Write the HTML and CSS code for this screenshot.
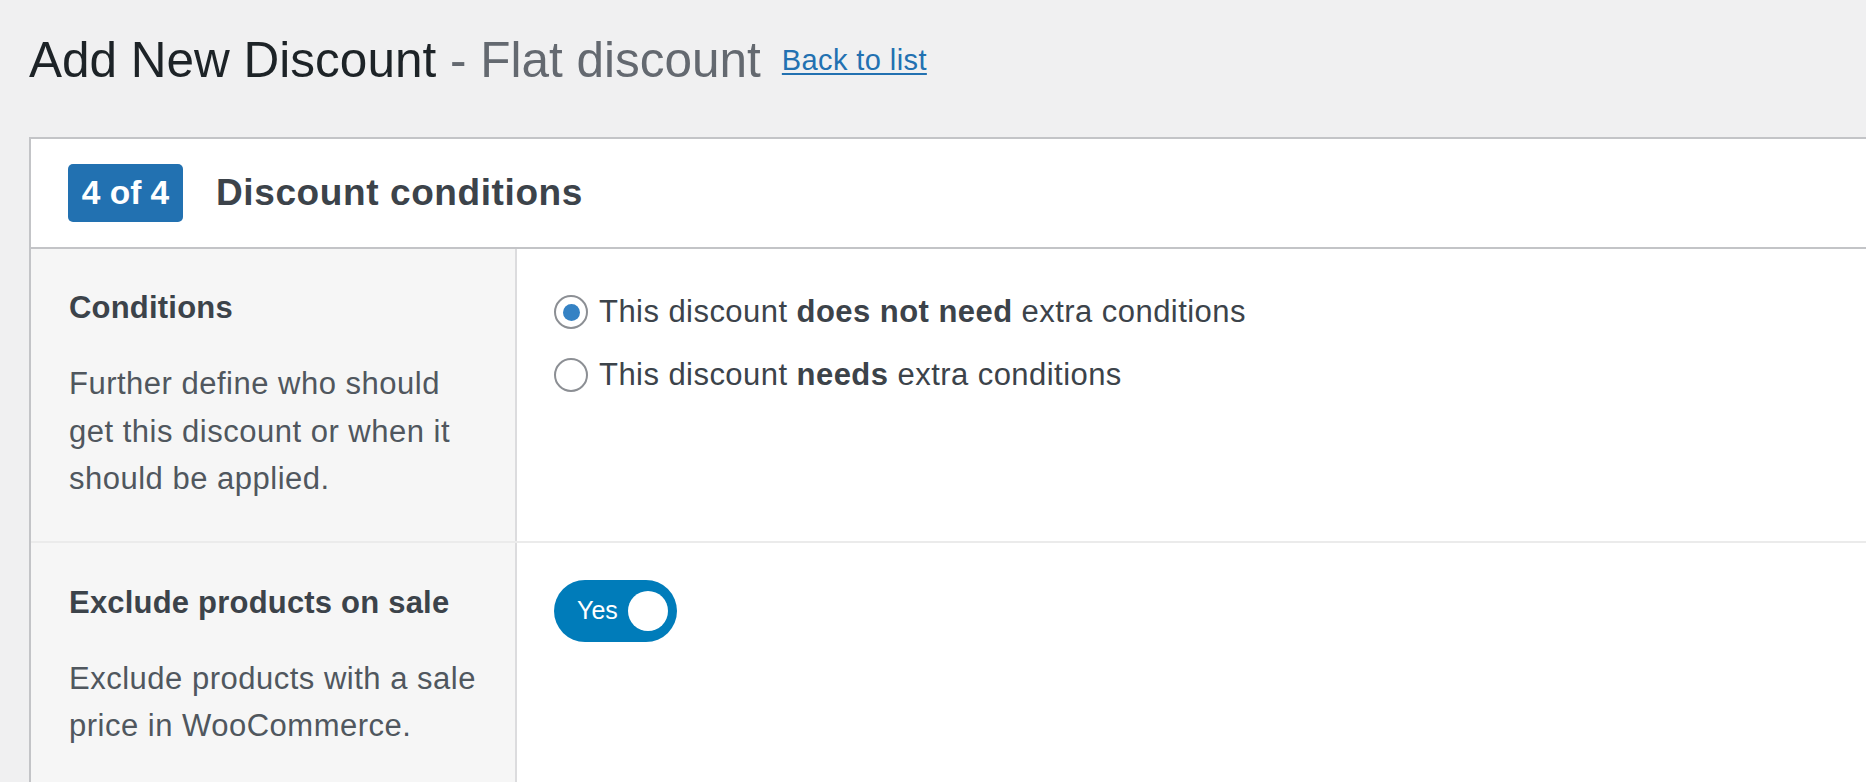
FILE: index.html
```html
<!DOCTYPE html>
<html lang="en">
<head>
<meta charset="utf-8">
<title>Add New Discount</title>
<link rel="stylesheet" href="styles.css">
</head>
<body>
<div class="wrap">
  <div class="page-head"><h1 class="page-title">Add New Discount<span class="title-sub"> - Flat discount</span></h1><a class="back-link" href="#">Back to list</a></div>

  <div class="card">
    <div class="card-head">
      <span class="step-badge">4 of 4</span>
      <h2 class="card-title">Discount conditions</h2>
    </div>

    <div class="field-row row-conditions">
      <div class="field-label">
        <h3 class="label-title">Conditions</h3>
        <p class="description">Further define who should get this discount or when it should be applied.</p>
      </div>
      <div class="field-input">
        <div class="radio-option"><span class="radio checked"></span><span>This discount <strong>does not need</strong> extra conditions</span></div>
        <div class="radio-option"><span class="radio"></span><span>This discount <strong>needs</strong> extra conditions</span></div>
      </div>
    </div>

    <div class="field-row row-sale">
      <div class="field-label">
        <h3 class="label-title">Exclude products on sale</h3>
        <p class="description">Exclude products with a sale price in WooCommerce.</p>
      </div>
      <div class="field-input">
        <span class="toggle"><span class="toggle-text">Yes</span><span class="toggle-knob"></span></span>
      </div>
    </div>
  </div>
</div>
</body>
</html>
```

FILE: styles.css
```css
html, body {
  margin: 0;
  padding: 0;
  height: 100%;
  overflow: hidden;
  background: #f0f0f1;
}

body {
  font-family: "Liberation Sans", Arial, sans-serif;
  color: #3c434a;
}

.wrap {
  padding-left: 29px;
}

.page-head {
  padding-top: 28px;
  font-size: 49.5px;
  line-height: 64px;
  height: 64px;
  white-space: nowrap;
}

.page-title {
  display: inline;
  margin: 0;
  font-size: 49.5px;
  font-weight: 400;
  color: #1d2327;
}

.title-sub {
  color: #646970;
}

.back-link {
  margin-left: 21px;
  font-size: 29px;
  line-height: 1;
  letter-spacing: 0.4px;
  color: #2271b1;
  text-decoration: underline;
  text-underline-offset: 3px;
  vertical-align: 7px;
}

.card {
  margin-top: 45px;
  margin-right: -4px;
  background: #fff;
  border: 2px solid #c3c4c7;
}

.card-head {
  display: flex;
  align-items: center;
  gap: 33px;
  height: 108px;
  padding-left: 37px;
  border-bottom: 2px solid #c3c4c7;
}

.step-badge {
  display: flex;
  align-items: center;
  justify-content: center;
  width: 115px;
  height: 58px;
  border-radius: 5px;
  background: #2271b1;
  color: #fff;
  font-size: 33.5px;
  font-weight: 700;
}

.card-title {
  margin: 0;
  font-size: 37px;
  font-weight: 700;
  letter-spacing: 0.6px;
  color: #3c434a;
}

.field-row {
  display: flex;
  border-bottom: 2px solid #ebebeb;
}

.field-label {
  flex: none;
  width: 486px;
  box-sizing: border-box;
  padding: 35px 31px 38px 38px;
  background: #f6f6f6;
  border-right: 2px solid #dcdcde;
}

.row-sale .field-label {
  padding-top: 36px;
}

.label-title {
  margin: 0;
  font-size: 31px;
  line-height: 47.5px;
  font-weight: 700;
  letter-spacing: 0.2px;
  color: #3c434a;
}

.description {
  margin: 28.5px 0 0;
  font-size: 31px;
  line-height: 47.5px;
  letter-spacing: 0.5px;
  color: #50575e;
}

.field-input {
  flex: 1;
  padding: 39.5px 0 0 37px;
}

.row-sale .field-input {
  padding-top: 37px;
}

.radio-option {
  display: flex;
  align-items: center;
  gap: 11px;
  height: 47.5px;
  font-size: 31px;
  letter-spacing: 0.45px;
  color: #3c434a;
  white-space: nowrap;
}

.radio-option + .radio-option {
  margin-top: 15.5px;
}

.radio-option strong {
  font-weight: 700;
}

.radio {
  display: flex;
  align-items: center;
  justify-content: center;
  flex: none;
  width: 34px;
  height: 34px;
  box-sizing: border-box;
  border: 2px solid #8c8f94;
  border-radius: 50%;
  background: #fff;
}

.radio.checked::before {
  content: "";
  width: 17px;
  height: 17px;
  border-radius: 50%;
  background: #3582c4;
}

.toggle {
  display: inline-flex;
  align-items: center;
  justify-content: space-between;
  width: 123px;
  height: 62px;
  box-sizing: border-box;
  padding: 0 9px 0 23px;
  border-radius: 31px;
  background: #007cba;
  color: #fff;
  font-size: 25px;
}

.toggle-knob {
  width: 40px;
  height: 40px;
  border-radius: 50%;
  background: #fff;
}
```
